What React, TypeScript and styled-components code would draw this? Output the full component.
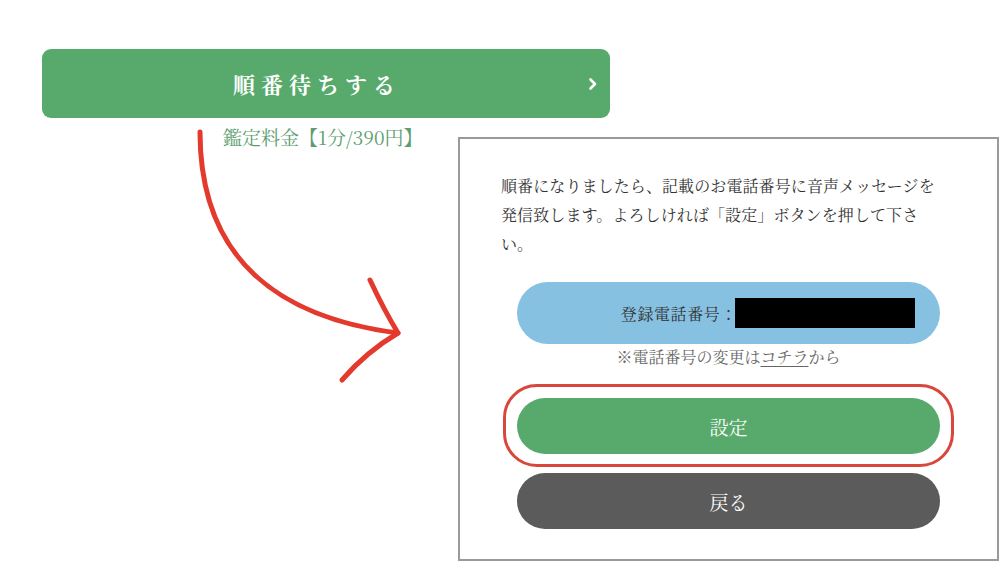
import styled, { createGlobalStyle } from "styled-components";

const GlobalStyle = createGlobalStyle`
  html, body {
    margin: 0;
    padding: 0;
    background: #ffffff;
  }
  body {
    font-family: "Noto Serif CJK JP", "Liberation Serif", "Noto Sans CJK JP", serif;
    color: #333333;
  }
`;

const Page = styled.div`
  position: relative;
  width: 1000px;
  height: 562px;
  overflow: hidden;
  display: flex;
  flex-direction: column;
  align-items: flex-start;
`;

const WaitButton = styled.button`
  margin: 49px 0 0 42px;
  width: 568px;
  height: 69px;
  border: none;
  border-radius: 9px;
  background: #58aa6c;
  color: #ffffff;
  display: grid;
  grid-template-columns: 1fr auto 1fr 24px;
  align-items: center;
  padding: 0 12px;
  font-family: inherit;
  font-size: 22px;
  font-weight: 700;
  letter-spacing: 6px;
  cursor: pointer;
`;

const WaitLabel = styled.span`
  grid-column: 2;
  margin-right: -6px;
`;

const Chevron = styled.svg`
  grid-column: 4;
  justify-self: end;
  margin-right: 0;
`;

const Fee = styled.div`
  margin: 9px 0 0 223px;
  font-size: 19px;
  line-height: 20px;
  color: #5b9e6f;
`;

const Modal = styled.div`
  margin: -10px 0 0 458px;
  width: 541px;
  height: 424px;
  box-sizing: border-box;
  border: 2px solid #9a9a9a;
  padding: 32px 0 0;
  display: flex;
  flex-direction: column;
  align-items: center;
`;

const Message = styled.p`
  align-self: flex-start;
  margin: 0 0 0 41px;
  width: 440px;
  font-size: 16px;
  line-height: 29px;
  letter-spacing: 0.1px;
  color: #333333;
`;

const Pill = styled.div<{ $bg: string; $h: number }>`
  width: 423px;
  height: ${({ $h }) => $h}px;
  border-radius: ${({ $h }) => $h / 2}px;
  background: ${({ $bg }) => $bg};
  display: flex;
  align-items: center;
  box-sizing: border-box;
`;

const PhonePill = styled(Pill)`
  margin-top: 24px;
  justify-content: flex-end;
  padding-right: 25px;
`;

const PhoneLabel = styled.span`
  font-size: 16px;
  letter-spacing: 0.6px;
  color: #333333;
  margin-right: -2px;
`;

const Masked = styled.span`
  display: block;
  width: 180px;
  height: 30px;
  background: #000000;
`;

const Note = styled.div`
  margin-top: 2px;
  font-size: 16px;
  line-height: 22px;
  color: #666666;
`;

const NoteLink = styled.a`
  color: #666666;
  text-decoration: underline;
  text-underline-offset: 3px;
`;

const Highlight = styled.div`
  margin-top: 16px;
  padding: 11px 11px 10px;
  border: 3px solid #d8463c;
  border-radius: 34px;
`;

const ActionPill = styled(Pill)`
  justify-content: center;
  color: #ffffff;
  font-size: 19px;
  cursor: pointer;
`;

const BackPill = styled(ActionPill)`
  margin-top: 6px;
`;

const Arrow = styled.svg`
  position: absolute;
  left: 0;
  top: 0;
  pointer-events: none;
`;

export default function App() {
  return (
    <>
      <GlobalStyle />
      <Page>
        <WaitButton>
          <WaitLabel>順番待ちする</WaitLabel>
          <Chevron width="10" height="14" viewBox="0 0 10 14">
            <polyline
              points="2.5,2.5 7,7 2.5,11.5"
              fill="none"
              stroke="#ffffff"
              strokeWidth="2.6"
              strokeLinecap="round"
              strokeLinejoin="round"
            />
          </Chevron>
        </WaitButton>
        <Fee>鑑定料金【1分/390円】</Fee>
        <Modal>
          <Message>
            順番になりましたら、記載のお電話番号に音声メッセージを発信致します。よろしければ「設定」ボタンを押して下さい。
          </Message>
          <PhonePill $bg="#86c1e2" $h={62}>
            <PhoneLabel>登録電話番号：</PhoneLabel>
            <Masked />
          </PhonePill>
          <Note>
            ※電話番号の変更は<NoteLink>コチラ</NoteLink>から
          </Note>
          <Highlight>
            <ActionPill $bg="#58aa6c" $h={56}>設定</ActionPill>
          </Highlight>
          <BackPill $bg="#5b5b5b" $h={56}>戻る</BackPill>
        </Modal>
        <Arrow width="1000" height="562" viewBox="0 0 1000 562">
          <g
            fill="none"
            stroke="#e43a2e"
            strokeWidth="5"
            strokeLinecap="round"
            strokeLinejoin="round"
          >
            <path d="M200 132 C 200 260 280 318 398 333" />
            <path d="M370 280 Q 384 310 398 333 Q 366 352 342 380" />
          </g>
        </Arrow>
      </Page>
    </>
  );
}
